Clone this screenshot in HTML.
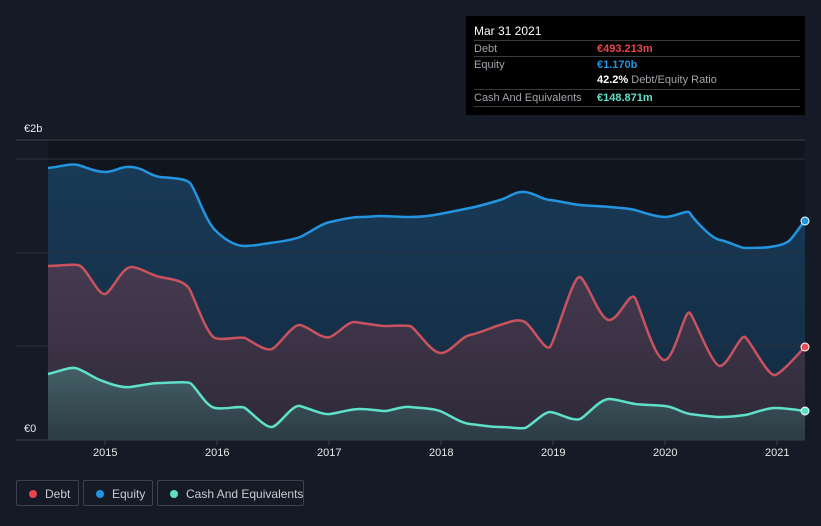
<!DOCTYPE html>
<html><head><meta charset="utf-8"><style>
html,body{margin:0;width:821px;height:526px;overflow:hidden}
body{background:#151b26;font-family:"Liberation Sans",sans-serif;position:relative}
.tt{position:absolute;left:466px;top:16px;width:339px;height:99px;background:#000;color:#fff;font-size:11px}
.row{position:absolute;left:8px;width:326px;border-top:1px solid #3a3a3a;height:16px;line-height:16px}
.lbl{color:#a0a4aa;position:absolute;left:0}
.val{position:absolute;left:123px;font-weight:bold;white-space:nowrap}
.leg{position:absolute;top:480px;height:26px;border:1px solid #3c424c;border-radius:2px;color:#c9ccd1;font-size:12px;line-height:26px;box-sizing:border-box;white-space:nowrap}
.leg i{position:absolute;left:12px;top:9px;width:8px;height:8px;border-radius:50%}
.leg span{position:absolute;left:28px}
.ax{position:absolute;color:#e6e8ea;font-size:11px}
</style></head><body>
<svg width="821" height="526" style="position:absolute;left:0;top:0">
<defs>
<linearGradient id="ge" x1="0" y1="0" x2="0" y2="1"><stop offset="0" stop-color="#183a57"/><stop offset="1" stop-color="#132a40"/></linearGradient>
<linearGradient id="gd" x1="0" y1="0" x2="0" y2="1"><stop offset="0" stop-color="#463a50"/><stop offset="1" stop-color="#2e2a38"/></linearGradient>
<linearGradient id="gc" x1="0" y1="0" x2="0" y2="1"><stop offset="0" stop-color="#446066"/><stop offset="1" stop-color="#2c3a44"/></linearGradient>
</defs>
<rect x="48" y="140" width="757" height="300" fill="#11161e"/>
<line x1="16" y1="140" x2="805" y2="140" stroke="#3a3f48"/>
<path d="M48,168 C60,167 70,163 78,165 S95,172 105,172 S120,166 132,167 S150,176 160,177 S185,178 190,183 S205,220 215,230 S235,246 245,246 S262,244 270,243 S292,240 300,237 S320,224 330,222 S350,217 360,217 S375,216 380,216 S400,217 410,217 S430,216 440,214 S460,210 470,208 S490,203 500,200 S515,191 525,192 S540,199 550,200 S570,204 580,205 S600,206 610,207 S628,208 635,210 S655,217 665,217 S688,209 690,213 S710,238 720,240 S740,248 745,248 S765,248 770,247 S785,245 790,240 S800,226 805,221 L805,440 L48,440 Z" fill="url(#ge)"/>
<g stroke="#2a303a"><line x1="16" y1="159" x2="805" y2="159"/><line x1="16" y1="253" x2="805" y2="253"/><line x1="16" y1="346" x2="805" y2="346"/></g>
<path d="M48,266 C60,266 70,264 78,265 S98,296 105,294 S122,266 132,267 S150,275 160,277 S185,280 190,290 S207,335 215,338 S240,336 245,338 S265,352 272,349 S292,324 300,325 S322,340 330,337 S348,321 355,322 S380,326 385,326 S405,325 410,326 S430,352 440,353 S460,337 470,335 S490,328 500,325 S518,318 525,322 S545,352 550,347 S573,274 580,277 S600,322 610,320 S630,290 635,298 S655,362 665,360 S685,307 690,313 S712,366 720,366 S740,334 745,337 S768,377 775,375 S798,354 805,347 L805,440 L48,440 Z" fill="url(#gd)"/>
<path d="M48,374 C58,372 68,367 75,368 S92,377 100,380 S120,388 130,387 S150,383 160,383 S185,381 190,383 S205,406 215,408 S240,405 245,408 S265,428 272,427 S292,404 300,406 S322,415 330,414 S350,409 360,409 S380,411 385,411 S402,406 410,407 S432,408 440,411 S460,423 470,424 S490,427 500,427 S520,429 525,428 S543,412 550,412 S573,422 580,419 S600,398 610,399 S628,403 635,404 S655,405 665,406 S682,413 690,414 S712,417 720,417 S738,416 745,415 S765,408 775,408 S798,410 805,411 L805,440 L48,440 Z" fill="url(#gc)"/>
<g fill="none" stroke-width="2.5">
<path d="M48,168 C60,167 70,163 78,165 S95,172 105,172 S120,166 132,167 S150,176 160,177 S185,178 190,183 S205,220 215,230 S235,246 245,246 S262,244 270,243 S292,240 300,237 S320,224 330,222 S350,217 360,217 S375,216 380,216 S400,217 410,217 S430,216 440,214 S460,210 470,208 S490,203 500,200 S515,191 525,192 S540,199 550,200 S570,204 580,205 S600,206 610,207 S628,208 635,210 S655,217 665,217 S688,209 690,213 S710,238 720,240 S740,248 745,248 S765,248 770,247 S785,245 790,240 S800,226 805,221" stroke="#2394df"/>
<path d="M48,266 C60,266 70,264 78,265 S98,296 105,294 S122,266 132,267 S150,275 160,277 S185,280 190,290 S207,335 215,338 S240,336 245,338 S265,352 272,349 S292,324 300,325 S322,340 330,337 S348,321 355,322 S380,326 385,326 S405,325 410,326 S430,352 440,353 S460,337 470,335 S490,328 500,325 S518,318 525,322 S545,352 550,347 S573,274 580,277 S600,322 610,320 S630,290 635,298 S655,362 665,360 S685,307 690,313 S712,366 720,366 S740,334 745,337 S768,377 775,375 S798,354 805,347" stroke="#c9525f"/>
<path d="M48,374 C58,372 68,367 75,368 S92,377 100,380 S120,388 130,387 S150,383 160,383 S185,381 190,383 S205,406 215,408 S240,405 245,408 S265,428 272,427 S292,404 300,406 S322,415 330,414 S350,409 360,409 S380,411 385,411 S402,406 410,407 S432,408 440,411 S460,423 470,424 S490,427 500,427 S520,429 525,428 S543,412 550,412 S573,422 580,419 S600,398 610,399 S628,403 635,404 S655,405 665,406 S682,413 690,414 S712,417 720,417 S738,416 745,415 S765,408 775,408 S798,410 805,411" stroke="#5ee0c9"/>
</g>
<line x1="16" y1="440" x2="805" y2="440" stroke="#3a3f48"/>
<g stroke="#3a3f48"><line x1="105" y1="440" x2="105" y2="445"/><line x1="217" y1="440" x2="217" y2="445"/><line x1="329" y1="440" x2="329" y2="445"/><line x1="441" y1="440" x2="441" y2="445"/><line x1="553" y1="440" x2="553" y2="445"/><line x1="665" y1="440" x2="665" y2="445"/><line x1="777" y1="440" x2="777" y2="445"/></g>
<circle cx="805" cy="221" r="4" fill="#2394df" stroke="#fff" stroke-width="1"/>
<circle cx="805" cy="347" r="4" fill="#e84c55" stroke="#fff" stroke-width="1"/>
<circle cx="805" cy="411" r="4" fill="#5ee0c9" stroke="#fff" stroke-width="1"/>
</svg>
<div class="ax" style="left:24px;top:123px">€2b</div>
<div class="ax" style="left:24px;top:423px">€0</div>
<div class="ax" style="left:93px;top:447px">2015</div>
<div class="ax" style="left:205px;top:447px">2016</div>
<div class="ax" style="left:317px;top:447px">2017</div>
<div class="ax" style="left:429px;top:447px">2018</div>
<div class="ax" style="left:541px;top:447px">2019</div>
<div class="ax" style="left:653px;top:447px">2020</div>
<div class="ax" style="left:765px;top:447px">2021</div>
<div class="tt">
<div style="position:absolute;left:8px;top:8px;font-size:12px">Mar 31 2021</div>
<div class="row" style="top:24px"><span class="lbl">Debt</span><span class="val" style="color:#e8464d">€493.213m</span></div>
<div class="row" style="top:40px"><span class="lbl">Equity</span><span class="val" style="color:#2394df">€1.170b</span></div>
<div class="row" style="top:56px;border-top:none"><span class="val" style="color:#fff">42.2% <span style="color:#a0a4aa;font-weight:normal">Debt/Equity Ratio</span></span></div>
<div class="row" style="top:73px;border-bottom:1px solid #3a3a3a"><span class="lbl">Cash And Equivalents</span><span class="val" style="color:#5ee0c9">€148.871m</span></div>
</div>
<div class="leg" style="left:16px;width:63px"><i style="background:#e8464d"></i><span>Debt</span></div>
<div class="leg" style="left:83px;width:70px"><i style="background:#2394df"></i><span>Equity</span></div>
<div class="leg" style="left:157px;width:147px"><i style="background:#5ee0c9"></i><span>Cash And Equivalents</span></div>
</body></html>
